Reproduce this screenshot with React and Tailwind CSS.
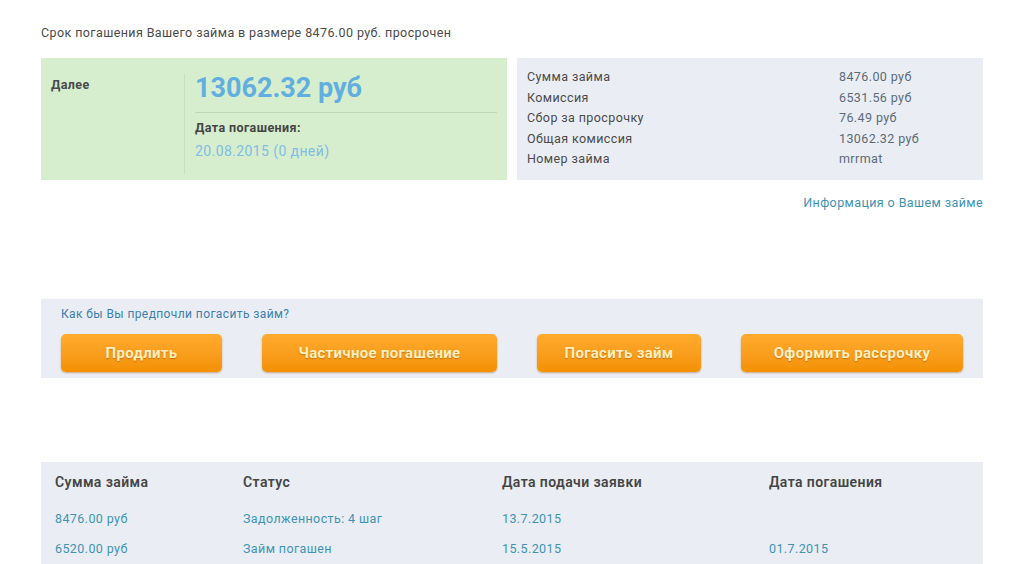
export default function App() {
  const details = [
    ['Сумма займа', '8476.00 руб'],
    ['Комиссия', '6531.56 руб'],
    ['Сбор за просрочку', '76.49 руб'],
    ['Общая комиссия', '13062.32 руб'],
    ['Номер займа', 'mrrmat'],
  ]
  const loans = [
    ['8476.00 руб', 'Задолженность: 4 шаг', '13.7.2015', ''],
    ['6520.00 руб', 'Займ погашен', '15.5.2015', '01.7.2015'],
  ]
  const btn =
    'h-[38px] rounded-[5px] bg-gradient-to-b from-[#ffab2e] to-[#f49100] text-[#ffefc0] text-[15px] font-bold tracking-[0.3px] shadow-[0_1px_2px_rgba(150,80,0,0.45)] [text-shadow:0_1px_1px_rgba(160,80,0,0.5)]'

  return (
    <div className="min-h-screen bg-white font-['Roboto',sans-serif] tracking-[0.4px] text-[#4a4a4a] px-[41px] pt-[24px]">
      <div className="text-[12.5px] h-[18px] leading-[18px]">
        Срок погашения Вашего займа в размере 8476.00 руб. просрочен
      </div>

      <div className="mt-[16px] flex gap-[10px] h-[122px]">
        {/* зелёный блок */}
        <div className="w-[466px] bg-[#d6eecd] flex pt-[16px] pb-[6px]">
          <div className="w-[143px] pl-[10px] text-[12.5px] font-bold text-[#4a4a4a] pt-[2px]">Далее</div>
          <div className="flex-1 border-l border-[#c6dfbc] pl-[10px] pr-[10px]">
            <div className="text-[27px] font-bold tracking-normal text-[#62aee0] leading-[26px] pt-[1px]">13062.32 руб</div>
            <div className="mt-[11px] border-t border-[#bfd7b6]"></div>
            <div className="mt-[6px] text-[12.5px] font-bold text-[#454545]">Дата погашения:</div>
            <div className="mt-[3px] text-[14px] text-[#7fbde4]">20.08.2015 (0 дней)</div>
          </div>
        </div>

        {/* серый блок */}
        <div className="flex-1 bg-[#eaeef4] pl-[10px] pt-[9px]">
          {details.map(([k, v]) => (
            <div key={k} className="flex h-[20.6px] items-center text-[12.5px]">
              <div className="w-[312px] text-[#4a4a4a]">{k}</div>
              <div className="text-[#5a6a78]">{v}</div>
            </div>
          ))}
        </div>
      </div>

      <div className="mt-[14px] text-right text-[12.5px] text-[#3e93b3]">Информация о Вашем займе</div>

      <div className="mt-[86px] bg-[#eaeef4] h-[79px] px-[20px] pt-[6px]">
        <div className="text-[12px] text-[#3a7fae]">Как бы Вы предпочли погасить займ?</div>
        <div className="mt-[11px] flex">
          <button className={btn + ' w-[161px]'}>Продлить</button>
          <button className={btn + ' w-[235px] ml-[40px]'}>Частичное погашение</button>
          <button className={btn + ' w-[164px] ml-[40px]'}>Погасить займ</button>
          <button className={btn + ' w-[222px] ml-[40px]'}>Оформить рассрочку</button>
        </div>
      </div>

      <div className="mt-[84px] bg-[#eaeef4] h-[110px] pl-[14px] pt-[12px]">
        <div className="flex text-[14px] font-semibold text-[#454545] h-[18px] items-center">
          <div className="w-[188px]">Сумма займа</div>
          <div className="w-[259px]">Статус</div>
          <div className="w-[267px]">Дата подачи заявки</div>
          <div>Дата погашения</div>
        </div>
        {loans.map((r, i) => (
          <div key={i} className={'flex text-[12.5px] text-[#3e93b3] h-[16px] items-center ' + (i === 0 ? 'mt-[20px]' : 'mt-[14px]')}>
            <div className="w-[188px]">{r[0]}</div>
            <div className="w-[259px]">{r[1]}</div>
            <div className="w-[267px]">{r[2]}</div>
            <div>{r[3]}</div>
          </div>
        ))}
      </div>
    </div>
  )
}
